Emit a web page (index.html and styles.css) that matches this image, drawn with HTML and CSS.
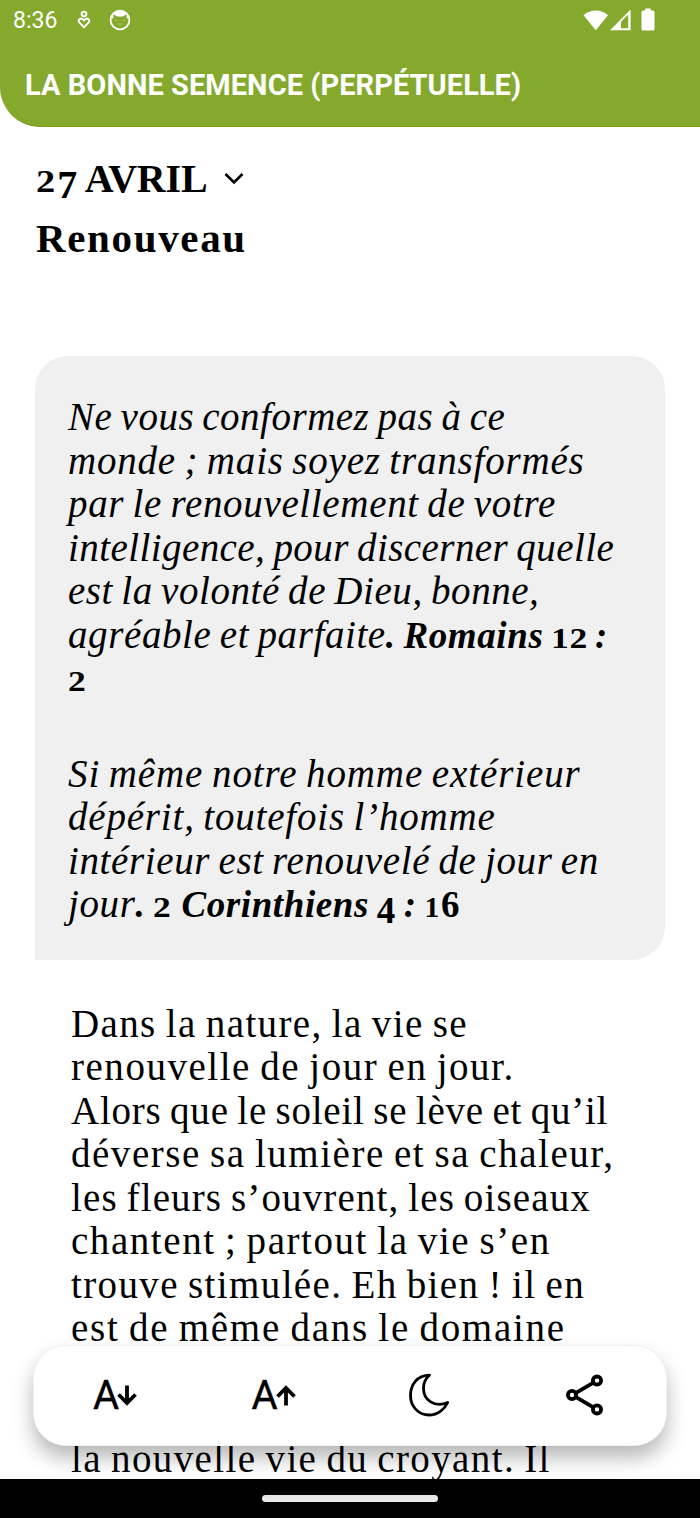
FILE: index.html
```html
<!DOCTYPE html>
<html lang="fr">
<head>
    <meta charset="UTF-8">
    <title>La Bonne Semence</title>
    <link rel="stylesheet" href="styles.css">
</head>
<body>
    <div id="app">
        <header class="header">
            <div class="status">
                <span class="time">8:36</span>
                <svg class="ico-heart" width="14" height="20" viewBox="0 0 14 20">
                    <circle cx="7" cy="4" r="2.3"/>
                    <path d="M7 17.2L2.3 12.4C0.2 9.8 3.9 6.8 7 10.3C10.1 6.8 13.8 9.8 11.7 12.4Z"/>
                </svg>
                <svg class="ico-cat" width="22" height="22" viewBox="0 0 22 22">
                    <circle cx="11" cy="11" r="9.4" fill="none" stroke="#fff" stroke-width="1.8"/>
                    <path d="M2 9C3 4 6 1.500 11 1.500S19 4 20 9L17.800 9.500L17.300 5.200L13.800 7.500H8.200L4.700 5.200L4.200 9.500Z" fill="#fff"/>
                    <path d="M6 11.500h2M14 11.500h2M9 14.500l2 1 2-1" fill="none" stroke="#b9d184" stroke-width="0.800"/>
                </svg>
                <div class="signals">
                    <svg width="26" height="22" viewBox="0 0 26 22"><path d="M0.500 6.200C7.500 0 18 0 25 6.200L12.800 21.300Z" fill="#fff"/></svg>
                    <svg width="21" height="22" viewBox="0 0 21 22"><path fill-rule="evenodd" d="M0 21.300L20.600 0.500V21.300ZM11 12.800V19.300H18.200V5.600Z" fill="#fff"/></svg>
                    <svg class="battery" width="14" height="23" viewBox="0 0 14 23"><path d="M4.300 0.500H9.700V2.500H12Q13.500 2.500 13.500 4V21Q13.500 22.500 12 22.500H2Q0.500 22.500 0.500 21V4Q0.500 2.500 2 2.500H4.300Z" fill="#fff"/></svg>
                </div>
            </div>
            <h1>LA BONNE SEMENCE (PERPÉTUELLE)</h1>
        </header>

        <main>
            <div class="title">
                <h2 class="date"><span class="num">2</span><span class="low">7</span> AVRIL
                    <svg width="20" height="14" viewBox="0 0 20 14"><path d="M1.500 2L10 10.500L18.500 2" fill="none" stroke="#000" stroke-width="2.600"/></svg>
                </h2>
                <h2 class="subject">Renouveau</h2>
            </div>

            <div class="verses">
                <p>
                    <span>Ne vous conformez pas à ce</span>
                    <span>monde ; mais soyez transformés</span>
                    <span>par le renouvellement de votre</span>
                    <span>intelligence, pour discerner quelle</span>
                    <span>est la volonté de Dieu, bonne,</span>
                    <span>agréable et parfaite<b>. Romains <i class="num">12</i> :</b></span>
                    <span><b><i class="num">2</i></b></span>
                </p>
                <p>
                    <span>Si même notre homme extérieur</span>
                    <span>dépérit, toutefois l’homme</span>
                    <span>intérieur est renouvelé de jour en</span>
                    <span>jour<b>. <i class="num">2</i> Corinthiens <i class="low">4</i> : <i class="num one">1</i><i class="six">6</i></b></span>
                </p>
            </div>

            <div class="text">
                <p>
                    <span>Dans la nature, la vie se</span>
                    <span>renouvelle de jour en jour.</span>
                    <span>Alors que le soleil se lève et qu’il</span>
                    <span>déverse sa lumière et sa chaleur,</span>
                    <span>les fleurs s’ouvrent, les oiseaux</span>
                    <span>chantent ; partout la vie s’en</span>
                    <span>trouve stimulée. Eh bien ! il en</span>
                    <span>est de même dans le domaine</span>
                </p>
                <p class="next"><span>la nouvelle vie du croyant. Il</span></p>
            </div>
        </main>

        <div class="toolbar">
            <div class="tool">A<svg width="20" height="22" viewBox="0 0 20 22"><path d="M10 0.500V18M1.500 9.500L10 18L18.500 9.500"/></svg></div>
            <div class="tool up">A<svg width="20" height="22" viewBox="0 0 20 22"><path d="M10 20.500V4M1.500 11.500L10 3L18.500 11.500"/></svg></div>
            <div class="tool">
                <svg class="moon" width="42" height="44" viewBox="0 0 42 44"><path d="M21.500 2.200C9 2.200 2.500 12 2.500 22.500C2.500 33.500 10.500 42 21 42C29.500 42 36.500 36.500 39.700 29.500C26.500 35 15.500 27 15.500 15.500C15.500 10 17.500 5.500 21.500 2.200Z"/></svg>
            </div>
            <div class="tool">
                <svg class="share" width="38" height="42" viewBox="0 0 38 42"><path d="M10 18.800L27 8.900M10 23.200L27 33.100"/><circle cx="6" cy="21" r="4.100"/><circle cx="31" cy="6.600" r="4.100"/><circle cx="31" cy="35.400" r="4.100"/></svg>
            </div>
        </div>

        <div class="nav"><div class="handle"></div></div>
    </div>
</body>
</html>
```

FILE: styles.css
```css
* {
    margin: 0;
    padding: 0;
    box-sizing: border-box;
}
body {
    background: #fff;
    color: #000;
    font-family: "Liberation Serif", serif;
}
#app {
    position: relative;
    width: 700px;
    height: 1518px;
    overflow: hidden;
}

/* header */
.header {
    height: 127px;
    background: #84a92c;
    border-bottom: 1px solid #789f15;
    border-bottom-left-radius: 40px;
    color: #fff;
    font-family: Roboto, sans-serif;
}
.status {
    display: flex;
    align-items: center;
    height: 40px;
    padding-left: 13px;
}
.time {
    width: 64px;
    font-size: 23px;
}
.ico-heart {
    fill: none;
    stroke: #fff;
    stroke-width: 2;
}
.ico-cat {margin-left: 18px;}
.signals {
    display: flex;
    align-items: center;
    margin-left: auto;
    padding-right: 45px;
}
.signals svg {margin: -1px 1px 0 0;}
.signals .battery {margin: -2px 0 0 9px;}
h1 {
    padding: 27px 0 0 25px;
    font-size: 29px;
    line-height: 36px;
    letter-spacing: 0.05px;
    font-weight: bold;
}

/* date + subject */
.title {
    height: 229px;
    padding: 23px 36px 0;
}
h2 {
    height: 58.5px;
    font-size: 40px;
    line-height: 58.5px;
    font-weight: bold;
    white-space: nowrap;
}
.date {letter-spacing: -0.2px;}
.date svg {
    margin-left: 9px;
    vertical-align: 6px;
}
.subject {
    font-size: 41px;
    letter-spacing: 1.65px;
}

/* old style figures */
.num {
    display: inline-block;
    margin-right: 0.17em;
    font-size: 0.8em;
    font-style: normal;
    line-height: 0;
    transform: scaleX(1.2);
    transform-origin: 0 50%;
}
.one {
    margin-right: 1px;
    transform: none;
}
.low {
    font-style: normal;
    line-height: 0;
    vertical-align: -6px;
}
.six {font-style: normal;}

/* bible verses */
.verses {
    width: 630px;
    height: 604px;
    margin-left: 35px;
    padding: 39px 0 0 33px;
    background: #f0f0f0;
    border-radius: 33px 33px 33px 0;
    font-style: italic;
}
.verses p, .text p {
    font-size: 39px;
    line-height: 43.5px;
    word-spacing: -2px;
    white-space: nowrap;
}
.verses p + p {margin-top: 52px;}
p span {
    display: block;
    height: 43.5px;
}
.verses span {letter-spacing: 0.6px;}
.verses b {
    font-size: 37px;
    letter-spacing: 0.6px;
}
.verses p:first-child span:nth-child(1) {letter-spacing: 0.5px;}
.verses p:first-child span:nth-child(2) {letter-spacing: 0.8px;}
.verses p:first-child span:nth-child(3) {letter-spacing: 0.67px;}
.verses p:first-child span:nth-child(4) {letter-spacing: 0.43px;}
.verses p:first-child span:nth-child(5) {letter-spacing: 0.56px;}
.verses p:last-child span:nth-child(1) {letter-spacing: 0.9px;}
.verses p:last-child span:nth-child(2) {letter-spacing: 0.81px;}
.verses p:last-child span:nth-child(3) {letter-spacing: 0.63px;}

/* daily text */
.text {padding: 41.5px 0 0 71px;}
.text span {letter-spacing: 1.38px;}
.text span:nth-child(2) {letter-spacing: 1.53px;}
.text span:nth-child(3) {letter-spacing: 0.78px;}
.text span:nth-child(4) {letter-spacing: 1.53px;}
.text span:nth-child(5) {letter-spacing: 1.13px;}
.text span:nth-child(6) {letter-spacing: 1.56px;}
.text span:nth-child(8) {letter-spacing: 1.73px;}
.text .next {margin-top: 87px;}

/* floating toolbar */
.toolbar {
    position: absolute;
    left: 33px;
    top: 1345px;
    display: grid;
    grid-template-columns: repeat(4, 157px);
    width: 634px;
    height: 101px;
    padding: 0 3px;
    background: #fff;
    border: 1px solid #f2f2f2;
    border-radius: 33px;
    box-shadow: 0 12px 20px rgba(0, 0, 0, 0.28);
}
.tool {
    display: flex;
    align-items: center;
    justify-content: center;
    padding-right: 1px;
    font: 400 40px Roboto, sans-serif;
    -webkit-text-stroke: 0.4px #000;
}
.tool svg {
    margin-left: -2px;
    fill: none;
    stroke: #000;
    stroke-width: 3.8;
}
.up {padding-left: 3px;}
.tool .moon {
    margin: -1px 1px 0 0;
    stroke-width: 2.8;
    stroke-linejoin: round;
}
.tool .share {margin: -1px 3px 0 0;}

/* system bar */
.nav {
    position: absolute;
    left: 0;
    bottom: 0;
    display: flex;
    justify-content: center;
    width: 700px;
    height: 39px;
    padding-top: 16px;
    background: #000;
}
.handle {
    width: 176px;
    height: 7px;
    border-radius: 4px;
    background: #e8e8e8;
}
```
